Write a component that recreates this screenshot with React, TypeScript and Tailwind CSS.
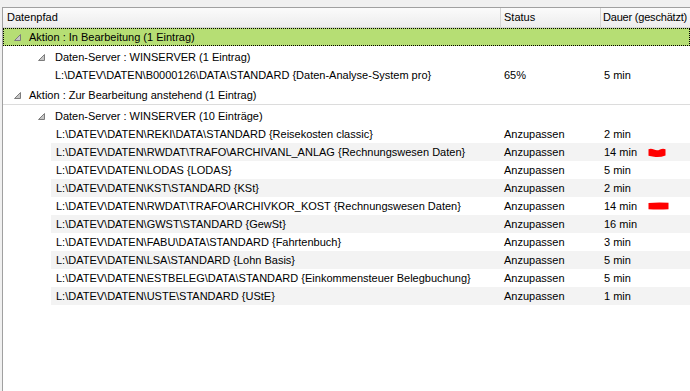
import React from 'react';

interface Entry {
  path: string;
  duration: string;
  mark?: 'wave' | 'bar';
}

const entries: Entry[] = [
  { path: 'L:\\DATEV\\DATEN\\REKI\\DATA\\STANDARD {Reisekosten classic}', duration: '2 min' },
  { path: 'L:\\DATEV\\DATEN\\RWDAT\\TRAFO\\ARCHIVANL_ANLAG {Rechnungswesen Daten}', duration: '14 min', mark: 'wave' },
  { path: 'L:\\DATEV\\DATEN\\LODAS {LODAS}', duration: '5 min' },
  { path: 'L:\\DATEV\\DATEN\\KST\\STANDARD {KSt}', duration: '2 min' },
  { path: 'L:\\DATEV\\DATEN\\RWDAT\\TRAFO\\ARCHIVKOR_KOST {Rechnungswesen Daten}', duration: '14 min', mark: 'bar' },
  { path: 'L:\\DATEV\\DATEN\\GWST\\STANDARD {GewSt}', duration: '16 min' },
  { path: 'L:\\DATEV\\DATEN\\FABU\\DATA\\STANDARD {Fahrtenbuch}', duration: '3 min' },
  { path: 'L:\\DATEV\\DATEN\\LSA\\STANDARD {Lohn Basis}', duration: '5 min' },
  { path: 'L:\\DATEV\\DATEN\\ESTBELEG\\DATA\\STANDARD {Einkommensteuer Belegbuchung}', duration: '5 min' },
  { path: 'L:\\DATEV\\DATEN\\USTE\\STANDARD {UStE}', duration: '1 min' },
];

function Expander() {
  return (
    <svg width="7" height="7" viewBox="0 0 7 7" className="shrink-0">
      <polygon points="6.5,0.5 6.5,6.5 0.5,6.5" fill="#c6c6c6" stroke="#7c7c7c" strokeWidth="1" />
    </svg>
  );
}

function RedMark({ kind }: { kind: 'wave' | 'bar' }) {
  if (kind === 'wave') {
    return (
      <svg width="18" height="10" viewBox="0 0 18 10" className="mt-[1px] shrink-0">
        <path d="M0.5 1.2 Q3 0.2 6 1.5 Q9 3.2 12 1.4 Q15 0 17.5 1.2 L17.5 7.5 Q12 9.6 6 8.8 Q3 8.5 0.5 7.8 Z" fill="#ff0000" />
      </svg>
    );
  }
  return (
    <svg width="21" height="8" viewBox="0 0 21 8" className="shrink-0">
      <path d="M0.5 1 Q10 0 20.5 0.8 L20.5 7.2 Q10 8 0.5 7.2 Z" fill="#ff0000" />
    </svg>
  );
}

function EntryRow({ entry, striped }: { entry: Entry; striped: boolean }) {
  return (
    <div className={`ml-[48px] flex h-[18px] items-center ${striped ? 'bg-[#f3f3f3]' : ''}`}>
      <div className="w-[449px] shrink-0 whitespace-nowrap pl-[5px]">{entry.path}</div>
      <div className="w-[100px] shrink-0 pl-[4px]">Anzupassen</div>
      <div className="flex items-center pl-[4px]">
        <span className="w-[44px] whitespace-nowrap">{entry.duration}</span>
        {entry.mark && <RedMark kind={entry.mark} />}
      </div>
    </div>
  );
}

export default function App() {
  return (
    <div className="flex h-[391px] w-[690px] flex-col overflow-hidden bg-[#f0f0f0] pl-[2px] pt-[7px] font-['Liberation_Sans',Arial,sans-serif] text-[11px] leading-none text-black">
      <div className="flex flex-1 flex-col border-l border-t border-[#a0a0a0] bg-white">
        {/* Column header */}
        <div className="flex h-[20px] shrink-0 items-center border-b border-[#d5d5d5] bg-gradient-to-b from-[#fbfbfb] to-[#ececec]">
          <div className="flex h-full w-[498px] shrink-0 items-center border-r border-[#d5d5d5] pl-[4px]">Datenpfad</div>
          <div className="flex h-full w-[100px] shrink-0 items-center border-r border-[#d5d5d5] pl-[3px]">Status</div>
          <div className="flex h-full flex-1 items-center whitespace-nowrap pl-[2px] tracking-[-0.2px]">Dauer (geschätzt)</div>
        </div>

        {/* Group: in progress (selected) */}
        <div className="flex h-[18px] shrink-0 items-center border border-dotted border-black bg-[#b6de74] pl-[10px]">
          <Expander />
          <span className="ml-[8px] whitespace-nowrap">Aktion : In Bearbeitung (1 Eintrag)</span>
        </div>
        <div className="mt-[3px] flex h-[17px] items-center pl-[35px]">
          <Expander />
          <span className="ml-[10px] whitespace-nowrap">Daten-Server : WINSERVER (1 Eintrag)</span>
        </div>
        <div className="ml-[48px] flex h-[18px] items-center">
          <div className="w-[449px] shrink-0 whitespace-nowrap pl-[4px]">
            L:\DATEV\DATEN\B0000126\DATA\STANDARD {'{Daten-Analyse-System pro}'}
          </div>
          <div className="w-[100px] shrink-0 pl-[4px]">65%</div>
          <div className="pl-[4px]">5 min</div>
        </div>

        {/* Group: pending */}
        <div className="mt-[3px] flex h-[18px] items-center border-b border-[#dcdcdc] pl-[11px]">
          <Expander />
          <span className="ml-[8px] whitespace-nowrap">Aktion : Zur Bearbeitung anstehend (1 Eintrag)</span>
        </div>
        <div className="mt-[2px] flex h-[18px] items-center pl-[35px]">
          <Expander />
          <span className="ml-[10px] whitespace-nowrap">Daten-Server : WINSERVER (10 Einträge)</span>
        </div>
        {entries.map((entry, i) => (
          <EntryRow key={entry.path} entry={entry} striped={i % 2 === 1} />
        ))}
      </div>
    </div>
  );
}
